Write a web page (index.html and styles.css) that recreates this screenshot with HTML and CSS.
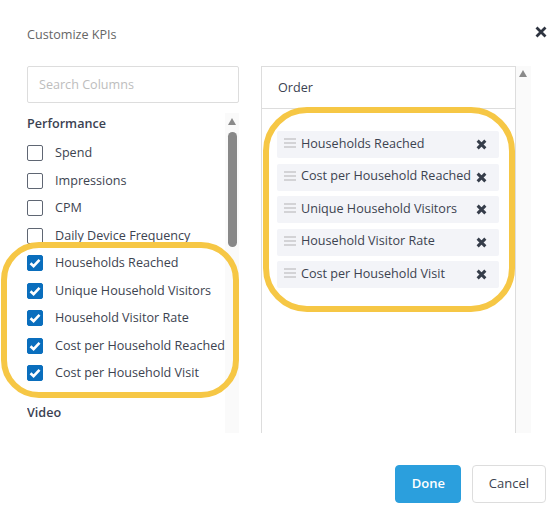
FILE: index.html
```html
<!DOCTYPE html>
<html lang="en">
<head>
<meta charset="utf-8">
<title>Customize KPIs</title>
<link rel="stylesheet" href="styles.css">
</head>
<body>

<div class="modal">
	<div class="modal-head">
		<span class="modal-title">Customize KPIs</span>
		<svg class="close" width="12" height="12" viewBox="0 0 12 12"><path d="M1.5 1.5L10.5 10.5M10.5 1.5L1.5 10.5"/></svg>
	</div>

	<div class="columns">
		<div class="picker">
			<div class="search">Search Columns</div>
			<div class="scroll">
				<div class="scroll-body">
					<div class="group">Performance</div>
					<label class="row"><span class="box"></span>Spend</label>
					<label class="row"><span class="box"></span>Impressions</label>
					<label class="row"><span class="box"></span>CPM</label>
					<label class="row"><span class="box"></span>Daily Device Frequency</label>
					<label class="row"><span class="box checked"></span>Households Reached</label>
					<label class="row"><span class="box checked"></span>Unique Household Visitors</label>
					<label class="row"><span class="box checked"></span>Household Visitor Rate</label>
					<label class="row"><span class="box checked"></span>Cost per Household Reached</label>
					<label class="row"><span class="box checked"></span>Cost per Household Visit</label>
					<div class="group video">Video</div>
				</div>
				<div class="bar">
					<span class="arrow"></span>
					<span class="thumb"></span>
				</div>
			</div>
		</div>

		<div class="order">
			<div class="order-box">
				<div class="order-head">Order</div>
				<ul class="order-list">
					<li><span class="handle"></span><span class="name">Households Reached</span><svg class="remove" viewBox="0 0 10 10"><path d="M1.5 1.5L8.5 8.5M8.5 1.5L1.5 8.5"/></svg></li>
					<li><span class="handle"></span><span class="name">Cost per Household Reached</span><svg class="remove" viewBox="0 0 10 10"><path d="M1.5 1.5L8.5 8.5M8.5 1.5L1.5 8.5"/></svg></li>
					<li><span class="handle"></span><span class="name">Unique Household Visitors</span><svg class="remove" viewBox="0 0 10 10"><path d="M1.5 1.5L8.5 8.5M8.5 1.5L1.5 8.5"/></svg></li>
					<li><span class="handle"></span><span class="name">Household Visitor Rate</span><svg class="remove" viewBox="0 0 10 10"><path d="M1.5 1.5L8.5 8.5M8.5 1.5L1.5 8.5"/></svg></li>
					<li><span class="handle"></span><span class="name">Cost per Household Visit</span><svg class="remove" viewBox="0 0 10 10"><path d="M1.5 1.5L8.5 8.5M8.5 1.5L1.5 8.5"/></svg></li>
				</ul>
			</div>
			<div class="bar">
				<span class="arrow"></span>
			</div>
		</div>
	</div>

	<div class="modal-foot">
		<button class="btn btn-primary">Done</button>
		<button class="btn">Cancel</button>
	</div>

	<!-- highlight rings -->
	<div class="ring ring-left"></div>
	<div class="ring ring-right"></div>
</div>

</body>
</html>
```

FILE: styles.css
```css
* {
	box-sizing: border-box;
}

body {
	margin: 0;
	background: #fff;
	font-family: "Open Sans", "Liberation Sans", sans-serif;
	font-size: 12.6px;
	color: #3c4350;
}

.modal {
	position: relative;
	width: 560px;
	height: 528px;
	overflow: hidden;
}

.modal-head {
	display: flex;
	justify-content: space-between;
	align-items: center;
	height: 20px;
	margin-top: 24px;
	padding: 0 13px 0 27px;
}

.modal-title {
	color: #666;
}

.close {
	margin-top: -5px;
}

.close path {
	stroke: #2e3440;
	stroke-width: 2.8;
	fill: none;
}

.columns {
	display: flex;
	gap: 22px;
	margin-top: 22px;
	padding-left: 27px;
}

/* left column */
.picker {
	width: 212px;
}

.search {
	height: 37px;
	border: 1px solid #ddd;
	border-radius: 2px;
	padding-left: 11px;
	line-height: 35px;
	color: #bdbdbd;
}

.scroll {
	display: flex;
	height: 320px;
	margin-top: 10px;
	overflow: hidden;
}

.scroll-body {
	flex: 1;
	white-space: nowrap;
}

.group {
	height: 20px;
	line-height: 22px;
	font-weight: 600;
	color: #3b4252;
	margin-bottom: 6.5px;
}

.group.video {
	margin-top: 15px;
}

.row {
	display: flex;
	align-items: center;
	gap: 12px;
	height: 27.5px;
	line-height: 16px;
}

.box {
	width: 16px;
	height: 16px;
	border: 1px solid #5f6673;
	border-radius: 2px;
	flex: none;
}

.box.checked {
	border-color: #0a6ebd;
	background: #0a6ebd url("data:image/svg+xml,%3Csvg xmlns='http://www.w3.org/2000/svg' viewBox='0 0 16 16'%3E%3Cpath d='M3.5 8.2L6.6 11.2L12.5 4.8' fill='none' stroke='white' stroke-width='2.6'/%3E%3C/svg%3E") center / 16px no-repeat;
}

/* fake scrollbars */
.bar {
	position: relative;
	width: 15px;
	flex: none;
	background: #fafafa;
}

.arrow {
	position: absolute;
	left: 3px;
	top: 5px;
	border-left: 4.5px solid transparent;
	border-right: 4.5px solid transparent;
	border-bottom: 7px solid #8a8a8a;
}

.thumb {
	position: absolute;
	left: 3px;
	top: 19px;
	width: 9px;
	height: 115px;
	border-radius: 5px;
	background: #888;
}

/* right column */
.order {
	display: flex;
	width: 270px;
	height: 367px;
}

.order-box {
	flex: 1;
	border: 1px solid #ddd;
	border-bottom: none;
}

.order .arrow {
	top: 4px;
}

.order-head {
	height: 42px;
	line-height: 42px;
	padding-left: 16px;
	border-bottom: 1px solid #ddd;
	color: #3b4252;
}

.order-list {
	list-style: none;
	margin: 0;
	padding: 22px 16px 0 15px;
}

.order-list li {
	display: flex;
	align-items: center;
	height: 27px;
	margin-bottom: 5.5px;
	padding: 0 12px 0 7px;
	background: #f3f4f8;
	border-radius: 2px;
}

.handle {
	width: 12px;
	height: 10px;
	flex: none;
	margin-right: 5px;
	margin-top: -3px;
	background: linear-gradient(#d3d3d6 0 2px, transparent 2px 4px, #d3d3d6 4px 6px, transparent 6px 8px, #d3d3d6 8px 10px);
}

.name {
	flex: 1;
	white-space: nowrap;
	margin-top: -3px;
}

.remove {
	width: 11px;
	height: 11px;
	flex: none;
}

.remove path {
	stroke: #363d4a;
	stroke-width: 2.7;
	fill: none;
}

/* footer */
.modal-foot {
	display: flex;
	justify-content: flex-end;
	gap: 11px;
	margin-top: 32px;
	padding-right: 14px;
}

.btn {
	height: 38px;
	padding: 0 16px 2px;
	border: 1px solid #ddd;
	border-radius: 4px;
	background: #fff;
	font-family: inherit;
	font-size: 13px;
	color: #3c4350;
}

.btn-primary {
	width: 66px;
	border-color: #2b9fdd;
	background: #2b9fdd;
	color: #fff;
	font-weight: 600;
}

/* yellow annotation rings */
.ring {
	position: absolute;
	border: 6px solid #f6c745;
	pointer-events: none;
}

.ring-left {
	left: 1px;
	top: 242px;
	width: 238px;
	height: 156px;
	border-radius: 38px;
}

.ring-right {
	left: 263px;
	top: 107px;
	width: 252px;
	height: 205px;
	border-radius: 44px;
}
```
